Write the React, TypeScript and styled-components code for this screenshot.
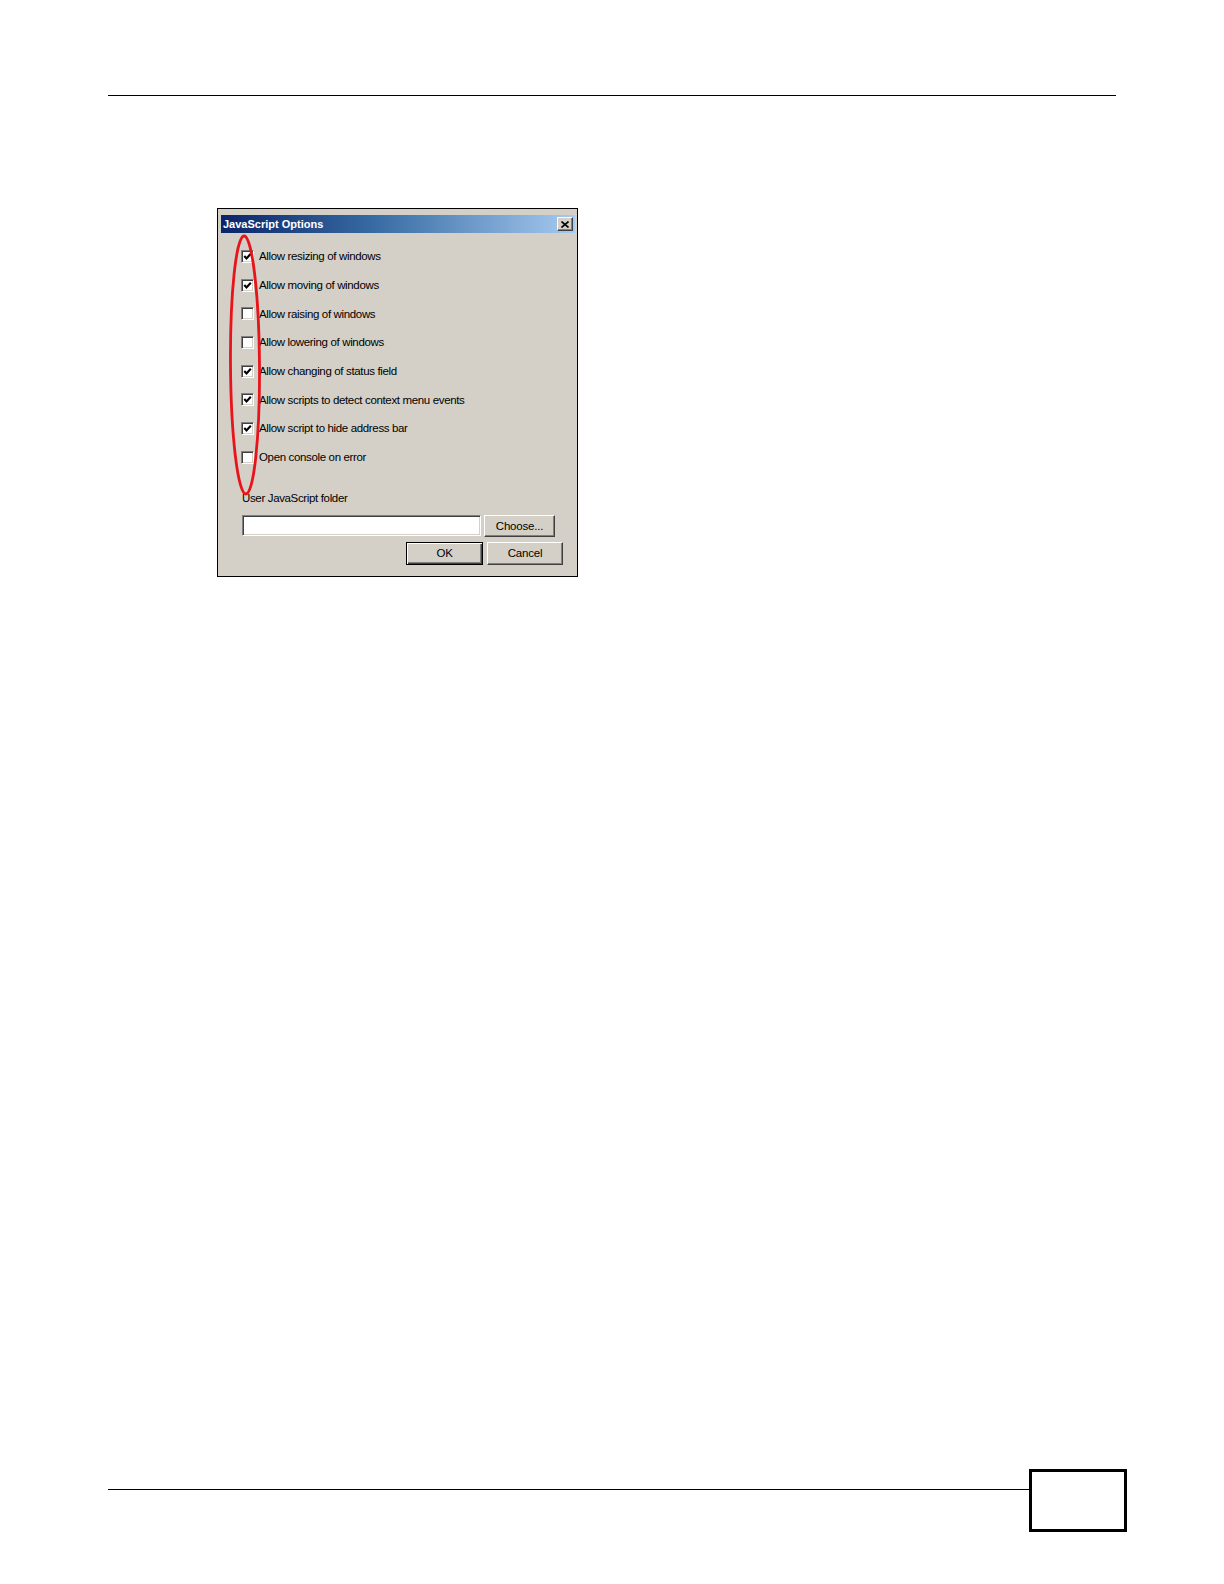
import React from 'react';
import styled, { createGlobalStyle } from 'styled-components';

const options = [
  { label: 'Allow resizing of windows', checked: true },
  { label: 'Allow moving of windows', checked: true },
  { label: 'Allow raising of windows', checked: false },
  { label: 'Allow lowering of windows', checked: false },
  { label: 'Allow changing of status field', checked: true },
  { label: 'Allow scripts to detect context menu events', checked: true },
  { label: 'Allow script to hide address bar', checked: true },
  { label: 'Open console on error', checked: false },
];

const GlobalStyle = createGlobalStyle`
  html, body {
    margin: 0;
    padding: 0;
    background: #ffffff;
  }
  * {
    box-sizing: border-box;
  }
`;

const App: React.FC = () => {
  return (
    <Page>
      <GlobalStyle />
      <Header />
      <Dialog>
        <TitleBar>
          <Title>JavaScript Options</Title>
          <CloseButton>
            <svg width="8" height="7" viewBox="0 0 8 7">
              <path d="M0.5 0.5 L7.5 6.5 M7.5 0.5 L0.5 6.5" stroke="#000" strokeWidth="1.6" />
            </svg>
          </CloseButton>
        </TitleBar>
        <Body>
          <OptionList>
            {options.map((option) => (
              <Row key={option.label}>
                <Checkbox>
                  {option.checked && (
                    <svg width="9" height="9" viewBox="0 0 9 9">
                      <path d="M1.3 4 L3.5 6.4 L7.8 1.7" fill="none" stroke="#000" strokeWidth="2.1" />
                    </svg>
                  )}
                </Checkbox>
                <Label>{option.label}</Label>
              </Row>
            ))}
          </OptionList>
          <FolderLabel>User JavaScript folder</FolderLabel>
          <FolderRow>
            <TextInput />
            <Button width={71} height={22}>
              Choose...
            </Button>
          </FolderRow>
          <Actions>
            <Button width={77} height={23} primary>
              OK
            </Button>
            <Button width={76} height={23}>
              Cancel
            </Button>
          </Actions>
        </Body>
        <Annotation width="34" height="262" viewBox="0 0 34 262">
          <ellipse cx="17" cy="131" rx="14.5" ry="129" fill="none" stroke="#e8141b" strokeWidth="2.8" transform="rotate(-0.4 17 131)" />
        </Annotation>
      </Dialog>
      <Footer>
        <FooterLine />
        <PageBox />
      </Footer>
    </Page>
  );
};

export default App;

const Page = styled.div`
  width: 1224px;
  min-height: 1584px;
  display: flex;
  flex-direction: column;
  align-items: flex-start;
  padding-bottom: 52px;
  font-family: 'Liberation Sans', Arial, sans-serif;
`;

const Header = styled.div`
  height: 96px;
  width: 1008px;
  margin-left: 108px;
  border-bottom: 1px solid #000;
`;

const Dialog = styled.div`
  position: relative;
  width: 361px;
  height: 369px;
  margin-top: 112px;
  margin-left: 217px;
  border: 1px solid #000;
  background: #d4d0c8;
  padding: 6px 2px 0 3px;
  display: flex;
  flex-direction: column;
`;

const TitleBar = styled.div`
  height: 18px;
  display: flex;
  align-items: center;
  justify-content: space-between;
  padding: 0 2px 0 2px;
  background: linear-gradient(to right, #0a246a 0%, #3a6ea5 45%, #a6caf0 100%);
`;

const Title = styled.span`
  color: #ffffff;
  font-weight: bold;
  font-size: 11px;
  letter-spacing: 0;
`;

const CloseButton = styled.span`
  width: 16px;
  height: 14px;
  display: flex;
  align-items: center;
  justify-content: center;
  background: #d4d0c8;
  border: 1px solid;
  border-color: #ffffff #404040 #404040 #ffffff;
  box-shadow: inset -1px -1px #808080;
`;

const Body = styled.div`
  display: flex;
  flex-direction: column;
  padding: 9px 12px 0 20px;
  font-size: 11.5px;
  letter-spacing: -0.35px;
  color: #000;
`;

const OptionList = styled.div`
  display: flex;
  flex-direction: column;
`;

const Row = styled.div`
  height: 28.7px;
  display: flex;
  align-items: center;
`;

const Checkbox = styled.span`
  width: 13px;
  height: 13px;
  margin-right: 5px;
  display: flex;
  align-items: center;
  justify-content: center;
  background: #ffffff;
  border: 1px solid;
  border-color: #808080 #ffffff #ffffff #808080;
  box-shadow: inset 1px 1px #404040, inset -1px -1px #d4d0c8;
`;

const Label = styled.span`
  white-space: nowrap;
`;

const FolderLabel = styled.div`
  margin: 19px 0 0 1px;
  line-height: 14px;
`;

const FolderRow = styled.div`
  display: flex;
  align-items: flex-start;
  gap: 3px;
  margin: 10px 8px 0 1px;
`;

const TextInput = styled.div`
  width: 239px;
  height: 21px;
  background: #ffffff;
  border: 1px solid;
  border-color: #808080 #ffffff #ffffff #808080;
  box-shadow: inset 1px 1px #404040, inset -1px -1px #d4d0c8;
`;

const Actions = styled.div`
  display: flex;
  justify-content: flex-end;
  gap: 4px;
  margin-top: 5px;
`;

const Button = styled.div<{ width: number; height: number; primary?: boolean }>`
  width: ${(p) => p.width}px;
  height: ${(p) => p.height}px;
  display: flex;
  align-items: center;
  justify-content: center;
  background: #d4d0c8;
  border: 1px solid;
  border-color: ${(p) => (p.primary ? '#000 #000 #000 #000' : '#ffffff #404040 #404040 #ffffff')};
  box-shadow: ${(p) =>
    p.primary
      ? 'inset 1px 1px #ffffff, inset -1px -1px #404040, inset -2px -2px #808080'
      : 'inset -1px -1px #808080'};
  font-size: 11.5px;
  letter-spacing: -0.2px;
`;

const Annotation = styled.svg`
  position: absolute;
  left: 10px;
  top: 25px;
  pointer-events: none;
`;

const Footer = styled.div`
  margin-top: auto;
  margin-left: 108px;
  display: flex;
  align-items: flex-start;
`;

const FooterLine = styled.div`
  width: 921px;
  margin-top: 20px;
  border-top: 1px solid #000;
`;

const PageBox = styled.div`
  width: 98px;
  height: 63px;
  border: 3px solid #000;
`;
